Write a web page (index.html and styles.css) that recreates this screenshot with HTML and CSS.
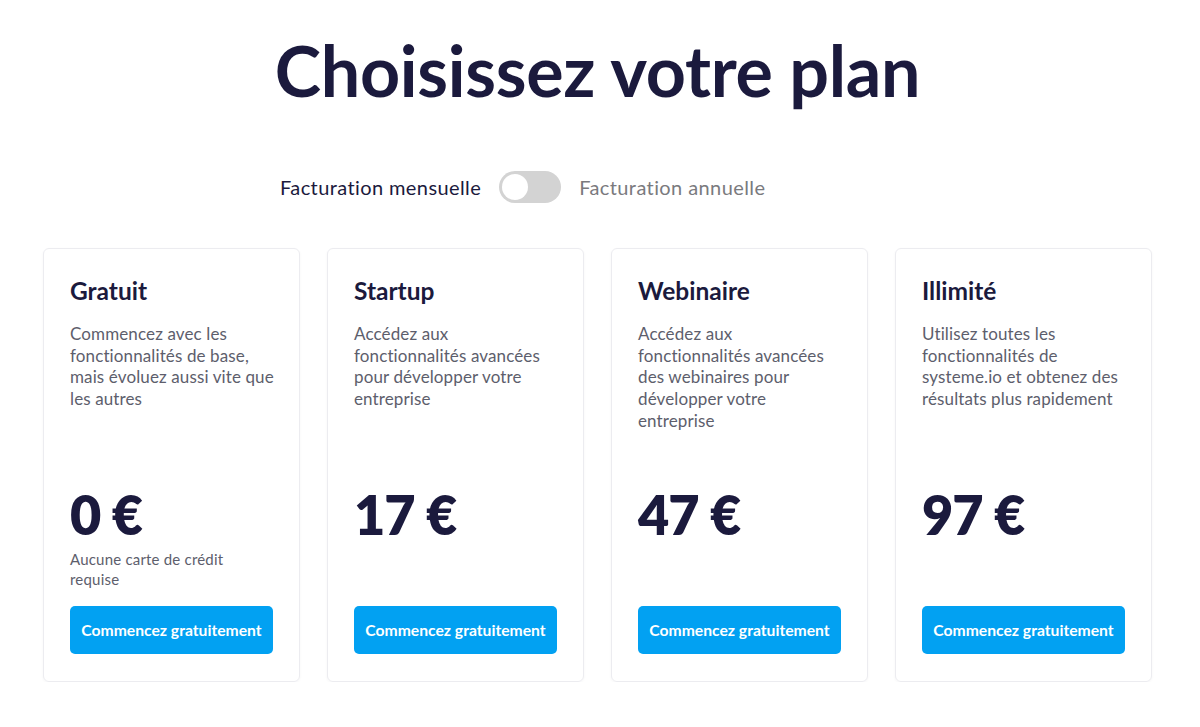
FILE: index.html
```html
<!DOCTYPE html>
<html lang="fr">
<head>
<meta charset="utf-8">
<title>Choisissez votre plan</title>
<link rel="stylesheet" href="styles.css">
</head>
<body>
<main class="page">
  <h1 class="title">Choisissez votre plan</h1>
  <div class="billing">
    <span class="billing-label active">Facturation mensuelle</span>
    <span class="toggle"><span class="knob"></span></span>
    <span class="billing-label">Facturation annuelle</span>
  </div>
  <section class="plans">
    <article class="card">
      <h2 class="card-title">Gratuit</h2>
      <p class="card-desc">Commencez avec les fonctionnalités de base, mais évoluez aussi vite que les autres</p>
      <div class="price">0 €</div>
      <p class="note">Aucune carte de crédit requise</p>
      <a class="btn" href="#">Commencez gratuitement</a>
    </article>
    <article class="card">
      <h2 class="card-title">Startup</h2>
      <p class="card-desc">Accédez aux fonctionnalités avancées pour développer votre entreprise</p>
      <div class="price">17 €</div>
      <p class="note"></p>
      <a class="btn" href="#">Commencez gratuitement</a>
    </article>
    <article class="card">
      <h2 class="card-title">Webinaire</h2>
      <p class="card-desc">Accédez aux fonctionnalités avancées des webinaires pour développer votre entreprise</p>
      <div class="price">47 €</div>
      <p class="note"></p>
      <a class="btn" href="#">Commencez gratuitement</a>
    </article>
    <article class="card">
      <h2 class="card-title">Illimité</h2>
      <p class="card-desc">Utilisez toutes les fonctionnalités de systeme.io et obtenez des résultats plus rapidement</p>
      <div class="price">97 €</div>
      <p class="note"></p>
      <a class="btn" href="#">Commencez gratuitement</a>
    </article>
  </section>
</main>
</body>
</html>
```

FILE: styles.css
```css
* { box-sizing: border-box; }
html, body { margin: 0; padding: 0; background: #ffffff; }
body {
  font-family: "Lato", "Noto Sans", sans-serif;
  color: #1b1b3a;
}
.page {
  width: 1109px;
  margin: 0 0 0 43px;
  padding-top: 26px;
  display: flex;
  flex-direction: column;
  align-items: center;
}
.title {
  margin: 0;
  font-size: 70px;
  line-height: 88px;
  font-weight: 700;
  color: #1b1a3d;
  letter-spacing: -0.3px;
}
.billing {
  align-self: flex-start;
  margin-top: 57px;
  margin-left: 237px;
  display: flex;
  align-items: center;
  gap: 18px;
}
.billing-label {
  font-size: 20px;
  letter-spacing: 0.4px;
  color: #7a7a7e;
}
.billing-label.active { color: #1b1a3d; }
.toggle {
  width: 62px;
  height: 32px;
  border-radius: 16px;
  background: #d3d3d3;
  padding: 3px;
  display: flex;
}
.knob {
  width: 26px;
  height: 26px;
  border-radius: 50%;
  background: #fff;
}
.plans {
  margin-top: 45px;
  width: 100%;
  display: grid;
  grid-template-columns: repeat(4, minmax(0, 1fr));
  gap: 27px;
}
.card {
  height: 434px;
  border: 1px solid #ececf0;
  border-radius: 6px;
  box-shadow: 0 1px 3px rgba(20, 20, 50, 0.04);
  padding: 27px 26px 27px 26px;
  display: flex;
  flex-direction: column;
  align-items: flex-start;
}
.card-title {
  margin: 0;
  font-size: 24.5px;
  line-height: 30px;
  font-weight: 700;
  color: #1b1a3d;
}
.card-desc {
  margin: 17px -4.5px 0 0;
  flex: 1;
  font-size: 17px;
  letter-spacing: 0.12px;
  line-height: 21.7px;
  color: #5d5e6c;
}
.price {
  font-size: 54px;
  line-height: 56px;
  font-weight: 800;
  color: #1b1a3d;
  letter-spacing: -1px;
}
.note {
  margin: 6px 0 0;
  min-height: 40px;
  width: 180px;
  font-size: 15px;
  letter-spacing: 0.2px;
  line-height: 20px;
  color: #5d5e6c;
}
.btn {
  margin-top: 17px;
  width: 100%;
  height: 48px;
  border-radius: 5px;
  background: #02a1f2;
  color: #fff;
  text-decoration: none;
  font-size: 15.7px;
  font-weight: 700;
  display: flex;
  align-items: center;
  justify-content: center;
}
```
